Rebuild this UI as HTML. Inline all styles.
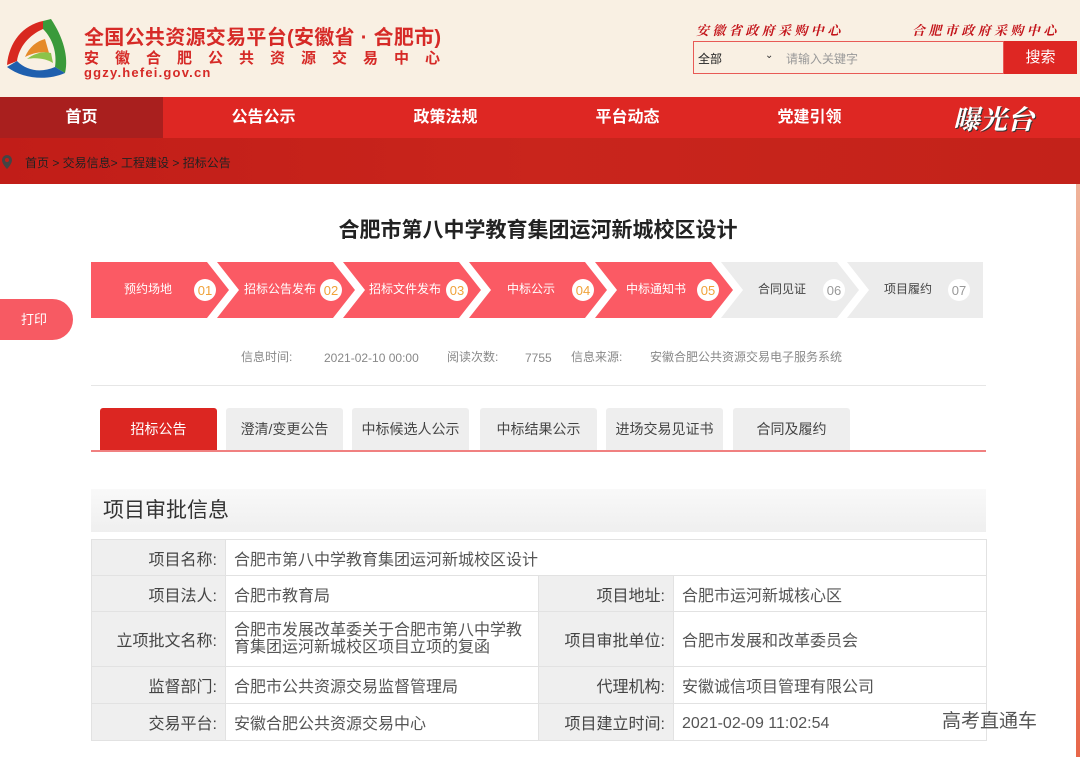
<!DOCTYPE html>
<html><head><meta charset="utf-8"><style>
*{margin:0;padding:0;box-sizing:border-box}
body{width:1080px;height:757px;overflow:hidden;background:#fff;font-family:"Liberation Sans","Noto Sans CJK SC",sans-serif;position:relative}
.a{position:absolute}
.hdr{left:0;top:0;width:1080px;height:97px;background:#f9f0e3}
.nav{left:0;top:97px;width:1080px;height:41px;background:#de2723}
.nav span{position:absolute;top:0;height:41px;line-height:41px;color:#fff;font-weight:bold;font-size:16px;text-align:center;width:163px}
.bc{left:0;top:138px;width:1080px;height:46px;background:linear-gradient(90deg,#c11d18,#c9251c 50%,#c3221a);}
td{border:1px solid #e2e2e2;font-size:16px;color:#555;height:36px;padding:0 8px}
td.l{background:#efefef;text-align:right;color:#444}
.tab{position:absolute;top:408px;height:43px;background:#eeeeee;color:#444;font-size:14px;line-height:43px;text-align:center;border-radius:3px 3px 0 0}
.m{position:absolute;top:348px;height:18px;line-height:18px;font-size:12px;color:#888}
</style></head><body>
<div class="a hdr"></div>
<svg class="a" style="left:3px;top:17px" width="68" height="65" viewBox="0 0 68 65">
<path d="M40 4 C20 8 6 25 4 48 L14 44 C16 30 26 18 40 12 Z" fill="#d8281f"/>
<path d="M40 4 L48 2 C60 20 66 40 62 56 L52 50 C54 36 50 22 40 12 Z" fill="#3a9a3a"/>
<path d="M4 50 C20 62 44 64 62 56 L52 50 C38 56 24 54 14 44 Z" fill="#1f5fae"/>
<path d="M22 40 C26 30 34 24 42 22 L46 36 C38 34 30 36 22 40Z" fill="#e58a2a"/>
<path d="M24 42 C34 40 44 42 50 46 L48 36 C40 34 32 36 24 42Z" fill="#8bc34a"/>
</svg>
<div class="a" style="left:84px;top:21px;color:#d62a27;font-size:20px;font-weight:bold;letter-spacing:0.3px">全国公共资源交易平台(安徽省 · 合肥市)</div>
<div class="a" style="left:84px;top:47px;color:#d62a27;font-size:15px;font-weight:bold;letter-spacing:16px">安徽合肥公共资源交易中心</div>
<div class="a" style="left:84px;top:65px;color:#d62a27;font-size:13px;font-weight:bold;letter-spacing:1.2px">ggzy.hefei.gov.cn</div>
<div class="a" style="left:696px;top:20px;color:#c4161c;font-size:13px;font-weight:bold;font-family:'Noto Serif CJK SC',serif;letter-spacing:3.4px;font-style:italic">安徽省政府采购中心</div>
<div class="a" style="left:912px;top:20px;color:#c4161c;font-size:13px;font-weight:bold;font-family:'Noto Serif CJK SC',serif;letter-spacing:3.4px;font-style:italic">合肥市政府采购中心</div>
<div class="a" style="left:693px;top:41px;width:311px;height:33px;border:1px solid #e85a55;background:#f9f0e3"></div>
<div class="a" style="left:698px;top:50px;font-size:12px;color:#222">全部</div>
<div class="a" style="left:765px;top:50px;font-size:10px;color:#333">⌄</div>
<div class="a" style="left:786px;top:50px;font-size:12px;color:#999">请输入关键字</div>
<div class="a" style="left:1004px;top:41px;width:73px;height:33px;background:#de2723;color:#fff;font-size:15px;text-align:center;line-height:33px">搜索</div>
<div class="a nav">
<span style="left:0;background:#a91f1e">首页</span>
<span style="left:182px">公告公示</span>
<span style="left:364px">政策法规</span>
<span style="left:546px">平台动态</span>
<span style="left:728px">党建引领</span>
<span style="left:912px;font-size:27px;font-family:'Noto Serif CJK SC',serif;color:#fff;text-shadow:1px 1px 0 #333;font-style:italic">曝光台</span>
</div>
<div class="a bc"></div>
<svg class="a" style="left:2px;top:155px" width="10" height="14"><path d="M5 0a5 5 0 0 1 5 5c0 4-5 9-5 9S0 9 0 5a5 5 0 0 1 5-5z" fill="#444"/><circle cx="5" cy="5" r="2" fill="#c11d18"/></svg>
<div class="a" style="left:25px;top:154px;font-size:12px;color:#222">首页 &gt; 交易信息&gt; 工程建设 &gt; 招标公告</div>
<div class="a" style="left:1076px;top:184px;width:4px;height:573px;background:linear-gradient(#f0b39a,#e8674a)"></div>

<div class="a" style="left:0;top:214px;width:1076px;text-align:center;font-size:21px;font-weight:bold;color:#222">合肥市第八中学教育集团运河新城校区设计</div>
<div class="a" style="left:0;top:299px;width:73px;height:41px;background:#f75a63;border-radius:0 21px 21px 0;color:#fff;font-size:13px;line-height:41px;padding-left:21px">打印</div>

<svg class="a" style="left:0;top:0" width="1080" height="330">
<g font-family="Liberation Sans,Noto Sans CJK SC,sans-serif" font-size="12">
<polygon points="91,262 207,262 229,290 207,318 91,318" fill="#fb5a64"/>
<polygon points="217,262 333,262 355,290 333,318 217,318 239,290" fill="#fb5a64"/>
<polygon points="343,262 459,262 481,290 459,318 343,318 365,290" fill="#fb5a64"/>
<polygon points="469,262 585,262 607,290 585,318 469,318 491,290" fill="#fb5a64"/>
<polygon points="595,262 711,262 733,290 711,318 595,318 617,290" fill="#fb5a64"/>
<polygon points="721,262 837,262 859,290 837,318 721,318 743,290" fill="#ececec"/>
<polygon points="847,262 983,262 983,318 847,318 869,290" fill="#ececec"/>
<g fill="#fff" text-anchor="middle">
<text x="148" y="293">预约场地</text><text x="280" y="293">招标公告发布</text><text x="405" y="293">招标文件发布</text><text x="531" y="293">中标公示</text><text x="656" y="293">中标通知书</text>
</g>
<g fill="#444" text-anchor="middle"><text x="782" y="293">合同见证</text><text x="908" y="293">项目履约</text></g>
<g fill="#fff"><circle cx="205" cy="290" r="11"/><circle cx="331" cy="290" r="11"/><circle cx="457" cy="290" r="11"/><circle cx="583" cy="290" r="11"/><circle cx="708" cy="290" r="11"/><circle cx="834" cy="290" r="11"/><circle cx="959" cy="290" r="11"/></g>
<g fill="#f0a23a" text-anchor="middle" font-size="13"><text x="205" y="295">01</text><text x="331" y="295">02</text><text x="457" y="295">03</text><text x="583" y="295">04</text><text x="708" y="295">05</text></g>
<g fill="#999" text-anchor="middle" font-size="13"><text x="834" y="295">06</text><text x="959" y="295">07</text></g>
</g></svg>

<div class="m" style="left:241px">信息时间:</div>
<div class="m" style="left:324px;top:349px">2021-02-10 00:00</div>
<div class="m" style="left:447px">阅读次数:</div>
<div class="m" style="left:525px;top:349px">7755</div>
<div class="m" style="left:571px">信息来源:</div>
<div class="m" style="left:650px">安徽合肥公共资源交易电子服务系统</div>
<div class="a" style="left:91px;top:385px;width:895px;height:1px;background:#e6e6e6"></div>

<div class="tab" style="left:100px;width:117px;background:#dc2622;color:#fff">招标公告</div>
<div class="tab" style="left:226px;width:117px">澄清/变更公告</div>
<div class="tab" style="left:352px;width:117px">中标候选人公示</div>
<div class="tab" style="left:480px;width:117px">中标结果公示</div>
<div class="tab" style="left:606px;width:117px">进场交易见证书</div>
<div class="tab" style="left:733px;width:117px">合同及履约</div>
<div class="a" style="left:91px;top:450px;width:895px;height:2px;background:#f08080"></div>

<div class="a" style="left:91px;top:489px;width:895px;height:43px;background:linear-gradient(#f9f9f9,#efefef);font-size:21px;color:#333;line-height:43px;padding-left:12px">项目审批信息</div>
<table class="a" style="left:91px;top:539px;width:896px;border-collapse:collapse">
<tr><td class="l" style="width:134px">项目名称:</td><td colspan="3">合肥市第八中学教育集团运河新城校区设计</td></tr>
<tr><td class="l">项目法人:</td><td style="width:313px">合肥市教育局</td><td class="l" style="width:135px">项目地址:</td><td>合肥市运河新城核心区</td></tr>
<tr style="height:55px"><td class="l">立项批文名称:</td><td style="line-height:17px">合肥市发展改革委关于合肥市第八中学教育集团运河新城校区项目立项的复函</td><td class="l">项目审批单位:</td><td>合肥市发展和改革委员会</td></tr>
<tr style="height:37px"><td class="l">监督部门:</td><td>合肥市公共资源交易监督管理局</td><td class="l">代理机构:</td><td>安徽诚信项目管理有限公司</td></tr>
<tr style="height:37px"><td class="l">交易平台:</td><td>安徽合肥公共资源交易中心</td><td class="l">项目建立时间:</td><td style="vertical-align:middle;padding-top:3px">2021-02-09 11:02:54</td></tr>
</table>
<div class="a" style="left:942px;top:706px;font-size:19px;color:#555">高考直通车</div>
</body></html>
